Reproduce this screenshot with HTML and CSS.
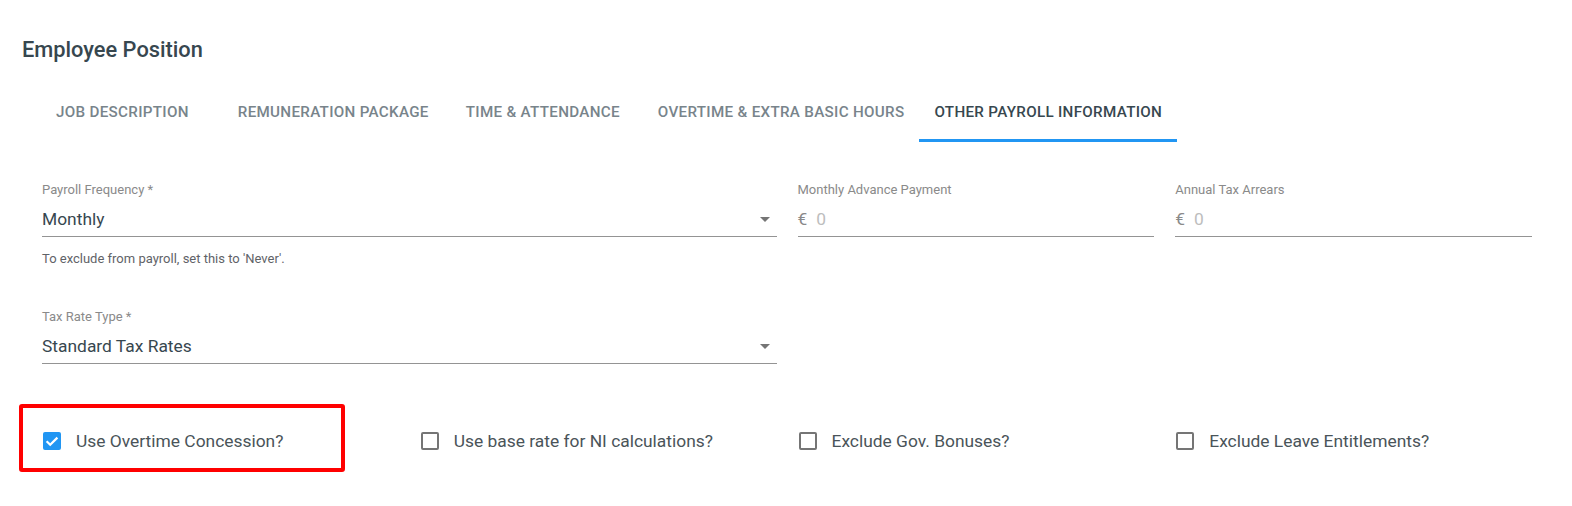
FILE: index.html
```html
<!DOCTYPE html>
<html lang="en">
<head>
<meta charset="utf-8">
<title>Employee Position</title>
<link rel="stylesheet" href="styles.css">
</head>
<body>
<div class="page">
  <h1 class="title">Employee Position</h1>

  <nav class="tabs">
    <div class="tab">Job Description</div>
    <div class="tab">Remuneration Package</div>
    <div class="tab">Time &amp; Attendance</div>
    <div class="tab">Overtime &amp; Extra Basic Hours</div>
    <div class="tab tab-active">Other Payroll Information</div>
  </nav>

  <section class="form">
    <div class="row row-first">
      <div class="col col-6">
        <div class="field">
          <label class="field-label">Payroll Frequency *</label>
          <div class="field-input">
            <span class="field-value">Monthly</span>
            <span class="arrow"></span>
          </div>
          <div class="field-hint">To exclude from payroll, set this to 'Never'.</div>
        </div>
      </div>
      <div class="col col-3">
        <div class="field">
          <label class="field-label">Monthly Advance Payment</label>
          <div class="field-input">
            <span class="prefix">€</span>
            <span class="placeholder">0</span>
          </div>
        </div>
      </div>
      <div class="col col-3">
        <div class="field">
          <label class="field-label">Annual Tax Arrears</label>
          <div class="field-input">
            <span class="prefix">€</span>
            <span class="placeholder">0</span>
          </div>
        </div>
      </div>
    </div>

    <div class="row row-second">
      <div class="col col-6">
        <div class="field">
          <label class="field-label">Tax Rate Type *</label>
          <div class="field-input">
            <span class="field-value">Standard Tax Rates</span>
            <span class="arrow"></span>
          </div>
        </div>
      </div>
    </div>

    <div class="row row-checks">
      <div class="col col-3">
        <div class="check">
          <span class="box box-on">
            <svg viewBox="0 0 18 18" width="18" height="18"><path d="M3.6 9.2 L7.2 12.8 L14.4 5.6" fill="none" stroke="#fff" stroke-width="2.2"/></svg>
          </span>
          <span class="check-label">Use Overtime Concession?</span>
        </div>
        <div class="highlight"></div>
      </div>
      <div class="col col-3">
        <div class="check">
          <span class="box"></span>
          <span class="check-label">Use base rate for NI calculations?</span>
        </div>
      </div>
      <div class="col col-3">
        <div class="check">
          <span class="box"></span>
          <span class="check-label">Exclude Gov. Bonuses?</span>
        </div>
      </div>
      <div class="col col-3">
        <div class="check">
          <span class="box"></span>
          <span class="check-label">Exclude Leave Entitlements?</span>
        </div>
      </div>
    </div>
  </section>
</div>
</body>
</html>
```

FILE: styles.css
```css
* { box-sizing: border-box; }

html, body {
  margin: 0;
  padding: 0;
  background: #ffffff;
}

body {
  font-family: Roboto, "Liberation Sans", Arial, sans-serif;
  color: #37474f;
}

.page {
  width: 1572px;
  height: 506px;
  overflow: hidden;
  padding-top: 37px;
}

.title {
  margin: 0 0 0 22px;
  font-size: 21.8px;
  font-weight: 500;
  line-height: 26px;
  color: #37474f;
}

.tabs {
  display: flex;
  margin: 19px 0 0 41px;
  height: 60px;
}

.tab {
  padding: 3px 15px 0;
  height: 60px;
  display: flex;
  align-items: center;
  justify-content: center;
  text-transform: uppercase;
  font-size: 15.2px;
  font-weight: 500;
  letter-spacing: 0.02em;
  color: #78848b;
  border-bottom: 3px solid transparent;
  white-space: nowrap;
}

.tab:nth-child(2) { margin-left: 19px; }
.tab:nth-child(3) { margin-left: 7px; }
.tab:nth-child(4) { margin-left: 8px; }

.tab-active {
  color: #37474f;
  border-bottom-color: #2196f3;
}

.form {
  margin-left: 31.5px;
  width: 1511px;
  position: relative;
}

.row {
  display: grid;
  grid-template-columns: repeat(12, 1fr);
}

.col {
  padding: 0 10.5px;
  position: relative;
}

.col-6 { grid-column: span 6; }
.col-3 { grid-column: span 3; }

.row-first { margin-top: 38px; }
.row-second { margin-top: 40px; }
.row-checks { margin-top: 65px; }

.field-label {
  display: block;
  font-size: 13px;
  line-height: 20px;
  color: #8a8a8a;
}

.field-input {
  display: flex;
  align-items: center;
  height: 37px;
  padding-top: 2px;
  border-bottom: 1px solid #949494;
  position: relative;
}

.field-value {
  font-size: 17.4px;
  color: #37474f;
  flex: 1;
}

.arrow {
  width: 0;
  height: 0;
  border-left: 5px solid transparent;
  border-right: 5px solid transparent;
  border-top: 5px solid #757575;
  margin-right: 7px;
}

.prefix {
  font-size: 17.4px;
  color: #8a8a8a;
  margin-right: 9px;
}

.placeholder {
  font-size: 17.4px;
  color: #bdbdbd;
}

.field-hint {
  margin-top: 14px;
  font-size: 13px;
  line-height: 16px;
  color: #5f6368;
}

.check {
  display: flex;
  align-items: center;
  height: 24px;
}

.box {
  width: 18px;
  height: 18px;
  margin-left: 1px;
  border: 2px solid #757575;
  border-radius: 2px;
  flex: none;
}

.box-on {
  border: none;
  background: #2196f3;
  display: flex;
}

.check-label {
  margin-left: 15px;
  font-size: 17.4px;
  color: #4a5459;
}

.highlight {
  position: absolute;
  left: -12.5px;
  top: -25px;
  width: 326px;
  height: 68px;
  border: 4px solid #ff0000;
  border-radius: 3px;
  pointer-events: none;
}
```
